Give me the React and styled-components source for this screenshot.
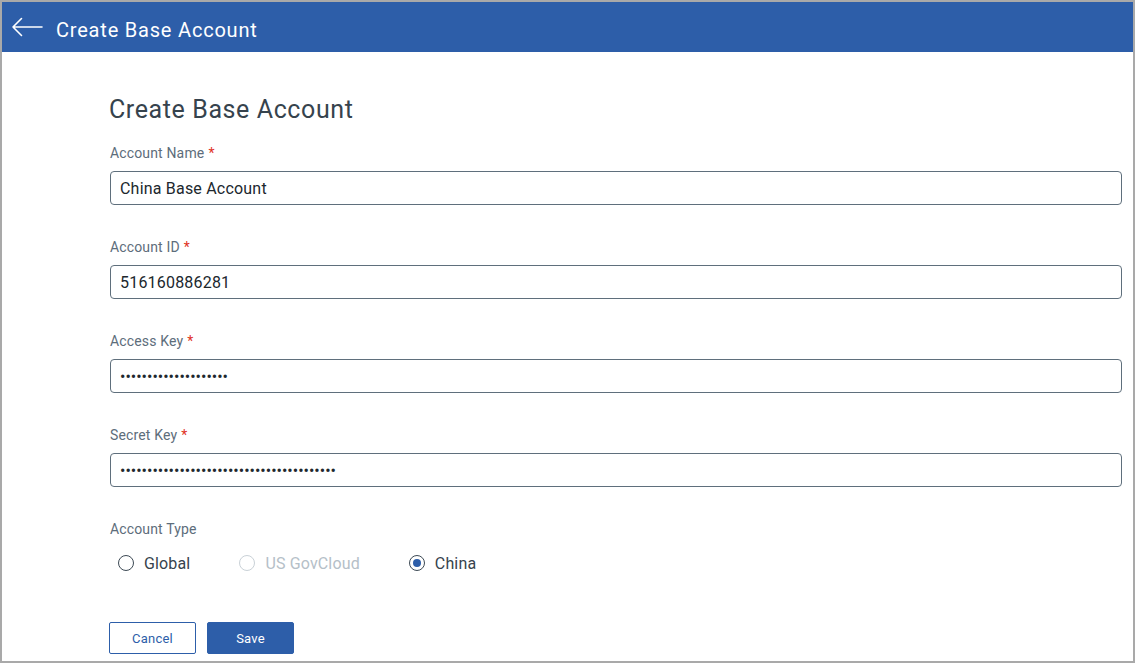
import React, { useState } from "react";
import styled, { createGlobalStyle } from "styled-components";

const GlobalStyle = createGlobalStyle`
  html, body {
    margin: 0;
    padding: 0;
    background: #ffffff;
  }
  body {
    font-family: Roboto, "Liberation Sans", Arial, sans-serif;
  }
  * {
    box-sizing: border-box;
  }
`;

const Frame = styled.div`
  width: 1135px;
  height: 663px;
  border: 2px solid #a9a9a9;
  display: flex;
  flex-direction: column;
  overflow: hidden;
  background: #fff;
`;

const Header = styled.header`
  height: 50px;
  flex-shrink: 0;
  background: #2d5ea9;
  display: flex;
  align-items: center;
  padding: 6px 0 0 9px;
`;

const BackButton = styled.button`
  background: none;
  border: none;
  padding: 0;
  margin: -6px 13px 0 0;
  width: 32px;
  height: 20px;
  display: flex;
  align-items: center;
  cursor: pointer;
`;

const HeaderTitle = styled.h1`
  margin: 0;
  font-size: 20px;
  line-height: 24px;
  font-weight: 400;
  letter-spacing: 0.8px;
  color: #ffffff;
`;

const Content = styled.main`
  padding: 42px 11px 0 107px;
  display: flex;
  flex-direction: column;
`;

const PageTitle = styled.h2`
  margin: 0 0 17px 0;
  font-size: 25px;
  line-height: 32px;
  font-weight: 400;
  letter-spacing: 0.6px;
  color: #36434d;
`;

const Field = styled.div`
  display: flex;
  flex-direction: column;
  gap: 8px;
  margin-bottom: 32px;
  padding-left: 1px;
`;

const Label = styled.label`
  font-size: 14px;
  line-height: 20px;
  letter-spacing: 0.15px;
  color: #5d6d7b;
`;

const Required = styled.span`
  color: #e0321f;
  margin-left: 4px;
`;

const Input = styled.input`
  height: 34px;
  width: 100%;
  border: 1px solid #5f6f7c;
  border-radius: 4px;
  padding: 0 9px;
  font-family: Roboto, "Liberation Sans", Arial, sans-serif;
  font-size: 16px;
  letter-spacing: ${(p) => (p.type === "password" ? "0" : "0.2px")};
  color: #20272d;
  background: #fff;
  outline: none;
`;

const TypeLabel = styled(Label)`
  padding-left: 1px;
`;

const RadioRow = styled.div`
  display: flex;
  align-items: center;
  gap: 49px;
  margin: 12px 0 0 9px;
  height: 24px;
`;

const RadioOption = styled.label`
  display: flex;
  align-items: center;
  gap: 10px;
  font-size: 16px;
  letter-spacing: 0.15px;
  color: ${(p) => (p.$disabled ? "#b5c0c8" : "#36434d")};
  cursor: ${(p) => (p.$disabled ? "default" : "pointer")};
`;

const RadioCircle = styled.span`
  width: 16px;
  height: 16px;
  border-radius: 50%;
  border: 1.5px solid ${(p) => (p.$disabled ? "#c9d1d7" : "#3d4a55")};
  display: flex;
  align-items: center;
  justify-content: center;
  background: #fff;

  &::after {
    content: "";
    width: 8px;
    height: 8px;
    border-radius: 50%;
    background: ${(p) => (p.$checked ? "#2d5ea9" : "transparent")};
  }
`;

const ButtonRow = styled.div`
  display: flex;
  gap: 11px;
  margin: 47px 0 0 0;
`;

const Button = styled.button`
  width: 87px;
  height: 32px;
  border-radius: 2px;
  border: 1px solid #2d5ea9;
  background: ${(p) => (p.$primary ? "#2d5ea9" : "#ffffff")};
  color: ${(p) => (p.$primary ? "#ffffff" : "#2d5ea9")};
  font-family: Roboto, "Liberation Sans", Arial, sans-serif;
  font-size: 13px;
  letter-spacing: 0.2px;
  cursor: pointer;
`;

const BackArrow = () => (
  <svg width="32" height="20" viewBox="0 0 32 20" fill="none">
    <path
      d="M31 10H2M10.5 1.5L2 10l8.5 8.5"
      stroke="#ffffff"
      strokeWidth="1.6"
      strokeLinecap="round"
      strokeLinejoin="round"
    />
  </svg>
);

const fields = [
  { label: "Account Name", value: "China Base Account", type: "text" },
  { label: "Account ID", value: "516160886281", type: "text" },
  { label: "Access Key", value: "AKIAXXXXXXXXXXXXXXXX", type: "password" },
  {
    label: "Secret Key",
    value: "XXXXXXXXXXXXXXXXXXXXXXXXXXXXXXXXXXXXXXXX",
    type: "password",
  },
];

const accountTypes = [
  { id: "global", label: "Global" },
  { id: "gov", label: "US GovCloud", disabled: true },
  { id: "china", label: "China" },
];

export default function App() {
  const [values, setValues] = useState(fields.map((f) => f.value));
  const [accountType, setAccountType] = useState("china");

  return (
    <>
      <GlobalStyle />
      <Frame>
        <Header>
          <BackButton aria-label="Back">
            <BackArrow />
          </BackButton>
          <HeaderTitle>Create Base Account</HeaderTitle>
        </Header>
        <Content>
          <PageTitle>Create Base Account</PageTitle>
          {fields.map((f, i) => (
            <Field key={f.label}>
              <Label>
                {f.label}
                <Required>*</Required>
              </Label>
              <Input
                type={f.type}
                value={values[i]}
                onChange={(e) => {
                  const next = [...values];
                  next[i] = e.target.value;
                  setValues(next);
                }}
              />
            </Field>
          ))}
          <TypeLabel>Account Type</TypeLabel>
          <RadioRow>
            {accountTypes.map((t) => (
              <RadioOption
                key={t.id}
                $disabled={t.disabled}
                onClick={() => !t.disabled && setAccountType(t.id)}
              >
                <RadioCircle
                  $disabled={t.disabled}
                  $checked={accountType === t.id}
                />
                {t.label}
              </RadioOption>
            ))}
          </RadioRow>
          <ButtonRow>
            <Button>Cancel</Button>
            <Button $primary>Save</Button>
          </ButtonRow>
        </Content>
      </Frame>
    </>
  );
}
